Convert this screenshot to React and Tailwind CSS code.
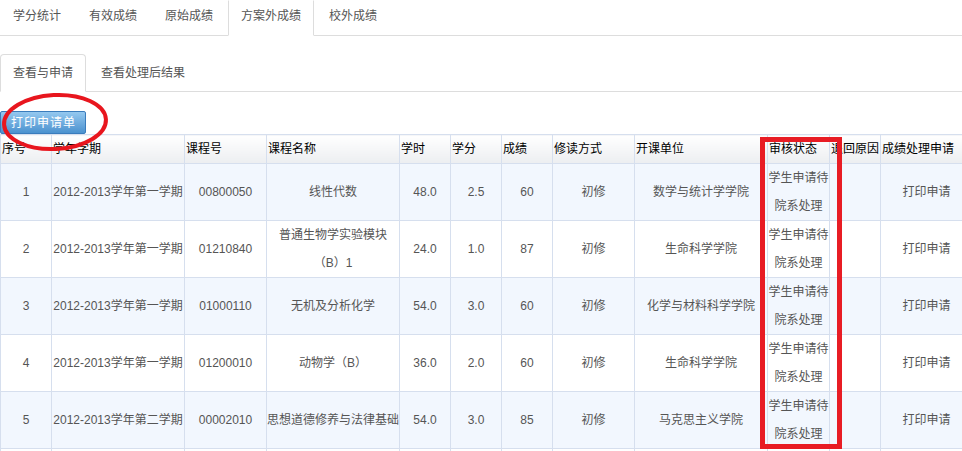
import React from "react";

const topTabs = ["学分统计", "有效成绩", "原始成绩", "方案外成绩", "校外成绩"];
const subTabs = ["查看与申请", "查看处理后结果"];

const columns = [
  { label: "序号", w: "w-[51px]" },
  { label: "学年学期", w: "w-[133px]" },
  { label: "课程号", w: "w-[82px]" },
  { label: "课程名称", w: "w-[133px]" },
  { label: "学时", w: "w-[51px]" },
  { label: "学分", w: "w-[51px]" },
  { label: "成绩", w: "w-[51px]" },
  { label: "修读方式", w: "w-[82px]" },
  { label: "开课单位", w: "w-[133px]" },
  { label: "审核状态", w: "w-[62px]" },
  { label: "退回原因", w: "w-[51px]" },
  { label: "成绩处理申请", w: "w-[82px]" },
];

const rows = [
  { no: 1, term: "2012-2013学年第一学期", code: "00800050", name: ["线性代数"], hours: "48.0", credit: "2.5", score: "60", unit: "数学与统计学学院" },
  { no: 2, term: "2012-2013学年第一学期", code: "01210840", name: ["普通生物学实验模块", "（B）1"], hours: "24.0", credit: "1.0", score: "87", unit: "生命科学学院" },
  { no: 3, term: "2012-2013学年第一学期", code: "01000110", name: ["无机及分析化学"], hours: "54.0", credit: "3.0", score: "60", unit: "化学与材料科学学院" },
  { no: 4, term: "2012-2013学年第一学期", code: "01200010", name: ["动物学（B）"], hours: "36.0", credit: "2.0", score: "60", unit: "生命科学学院" },
  { no: 5, term: "2012-2013学年第二学期", code: "00002010", name: ["思想道德修养与法律基础"], hours: "54.0", credit: "3.0", score: "85", unit: "马克思主义学院" },
  { no: 6, term: "", code: "", name: [""], hours: "", credit: "", score: "", unit: "" },
];

function Cell({ children, className = "" }) {
  return (
    <td className={`h-[57px] border border-[#d6dfee] p-0 text-center align-middle leading-[28px] whitespace-nowrap overflow-hidden ${className}`}>
      {children}
    </td>
  );
}

export default function App() {
  return (
    <div
      className="relative h-[451px] w-[962px] overflow-hidden bg-white text-[12px] text-[#555]"
      style={{ fontFamily: '"Liberation Sans", "Noto Sans CJK SC", sans-serif' }}
    >
      {/* Top tabs */}
      <ul className="flex h-[36px] border-b border-[#ddd]">
        {topTabs.map((t, i) => (
          <li
            key={t}
            className={`-mb-px mr-[2px] border px-[12px] pt-[8px] leading-[14px] ${
              i === 3 ? "border-[#ddd] border-t-transparent border-b-white bg-white" : "border-transparent"
            }`}
          >
            {t}
          </li>
        ))}
      </ul>

      {/* Sub tabs */}
      <ul className="mt-[18px] flex border-b border-[#ddd]">
        {subTabs.map((t, i) => (
          <li
            key={t}
            className={`-mb-px mr-[2px] rounded-t-[4px] border px-[12px] py-[11px] leading-[14px] ${
              i === 0 ? "border-[#ddd] border-b-white bg-white" : "border-transparent"
            }`}
          >
            {t}
          </li>
        ))}
      </ul>

      {/* Print button */}
      <div className="mt-[19px] flex h-[23px]">
        <button className="h-[23px] w-[86px] whitespace-nowrap rounded-[2px] border border-[#3a7cbc] bg-gradient-to-b from-[#94c8ef] to-[#4b92cf] pl-[10px] pr-0 text-left text-[12px] leading-[20px] tracking-[1px] text-white">
          打印申请单
        </button>
      </div>

      {/* Table */}
      <table className="w-[962px] table-fixed border-collapse">
        <colgroup>
          {columns.map((c) => (
            <col key={c.label} className={c.w} />
          ))}
        </colgroup>
        <thead>
          <tr>
            {columns.map((c) => (
              <th
                key={c.label}
                className="h-[29px] overflow-hidden whitespace-nowrap border border-[#d6dfee] bg-gradient-to-b from-white to-[#eceef1] p-0 pl-px text-left align-middle font-normal text-black"
              >
                {c.label}
              </th>
            ))}
          </tr>
        </thead>
        <tbody>
          {rows.map((r, i) => (
            <tr key={r.no} className={i % 2 === 0 ? "bg-[#f2f7fe]" : "bg-white"}>
              <Cell>{r.code ? r.no : ""}</Cell>
              <Cell>{r.term}</Cell>
              <Cell>{r.code}</Cell>
              <Cell>
                {r.name.map((n) => (
                  <div key={n}>{n}</div>
                ))}
              </Cell>
              <Cell>{r.hours}</Cell>
              <Cell>{r.credit}</Cell>
              <Cell>{r.score}</Cell>
              <Cell>{r.code ? "初修" : ""}</Cell>
              <Cell>{r.unit}</Cell>
              <Cell>
                {r.code && (
                  <>
                    <div>学生申请待</div>
                    <div>院系处理</div>
                  </>
                )}
              </Cell>
              <Cell></Cell>
              <Cell className="pl-[10px]">{r.code ? "打印申请" : ""}</Cell>
            </tr>
          ))}
        </tbody>
      </table>

      {/* Red annotation: ellipse around print button */}
      <svg className="pointer-events-none absolute left-0 top-[91px]" width="115" height="64" viewBox="0 0 115 64">
        <ellipse cx="55" cy="31" rx="51" ry="27" fill="none" stroke="#e8161e" strokeWidth="4" transform="rotate(-3 55 31)" />
      </svg>

      {/* Red annotation: rectangle around status column */}
      <div className="pointer-events-none absolute left-[760px] top-[137px] h-[312px] w-[82px] border-[5px] border-[#e81c24]" />
    </div>
  );
}
